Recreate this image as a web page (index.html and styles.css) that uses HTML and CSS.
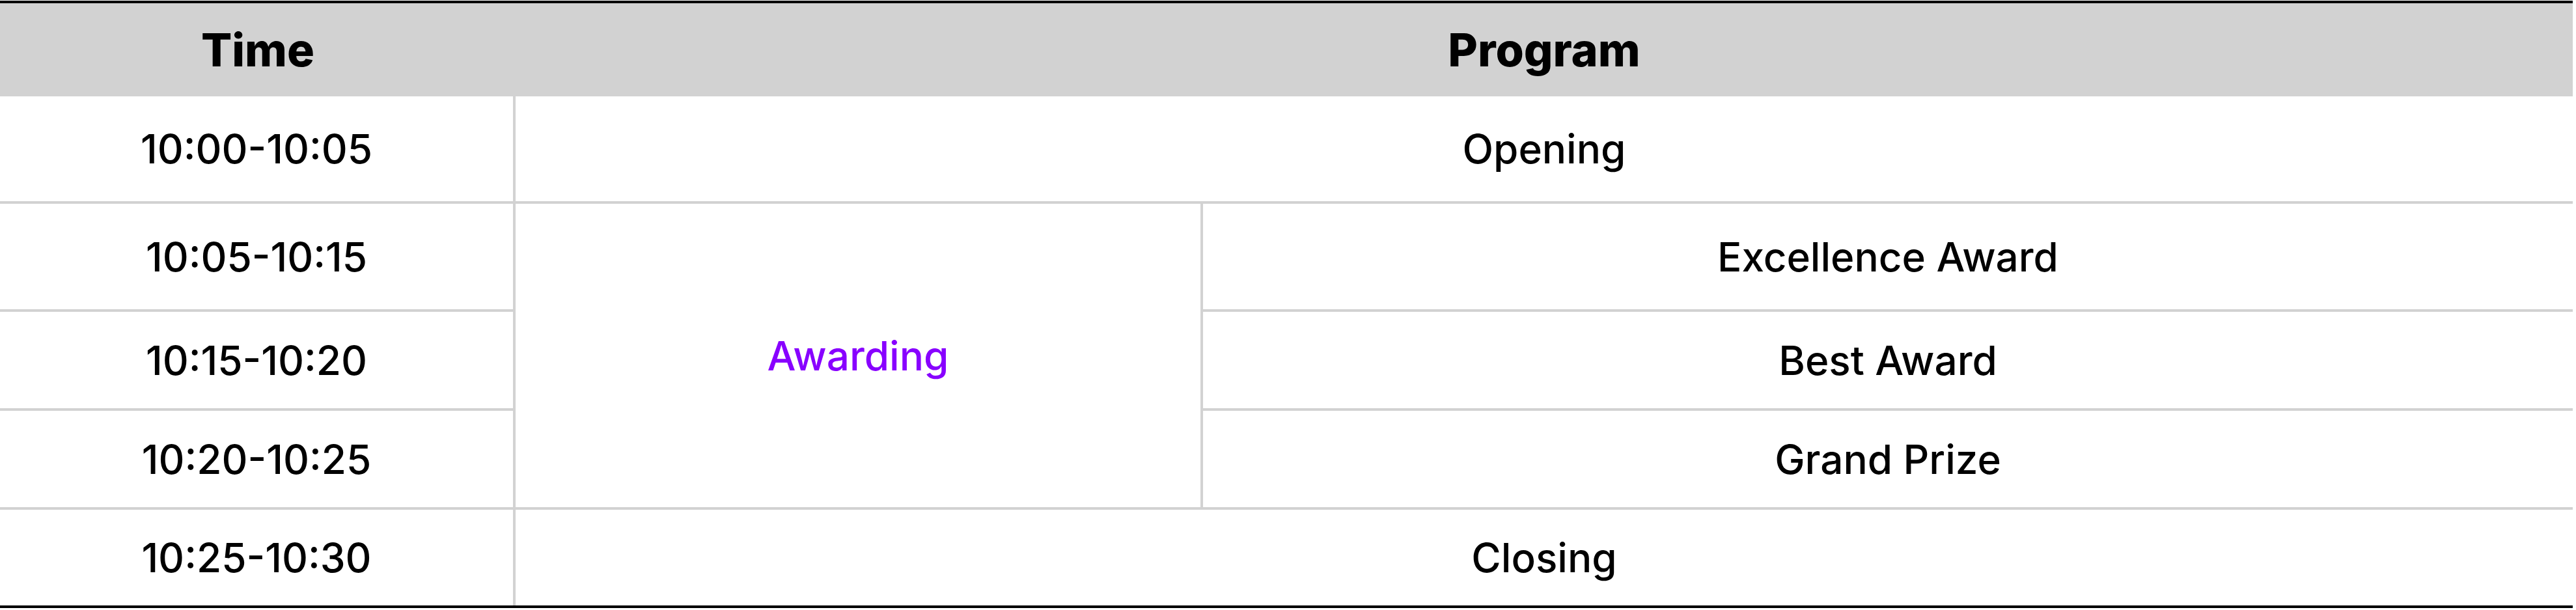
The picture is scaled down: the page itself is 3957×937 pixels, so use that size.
FILE: index.html
```html
<!DOCTYPE html>
<html lang="en">
<head>
<meta charset="utf-8">
<title>Program</title>
<link rel="stylesheet" href="styles.css">
</head>
<body>
<table class="schedule">
  <colgroup>
    <col class="col-time">
    <col class="col-group">
    <col class="col-item">
  </colgroup>
  <thead>
    <tr class="row-head">
      <th>Time</th>
      <th colspan="2">Program</th>
    </tr>
  </thead>
  <tbody>
    <tr class="row-a">
      <td class="time">10:00-10:05</td>
      <td colspan="2" class="line">Opening</td>
    </tr>
    <tr class="row-b">
      <td class="time">10:05-10:15</td>
      <td rowspan="3" class="group">Awarding</td>
      <td class="line">Excellence Award</td>
    </tr>
    <tr class="row-c">
      <td class="time">10:15-10:20</td>
      <td class="line">Best Award</td>
    </tr>
    <tr class="row-c">
      <td class="time">10:20-10:25</td>
      <td class="line">Grand Prize</td>
    </tr>
    <tr class="row-e">
      <td class="time last">10:25-10:30</td>
      <td colspan="2">Closing</td>
    </tr>
  </tbody>
</table>
</body>
</html>
```
FILE: styles.css
```css
html, body {
  margin: 0;
  padding: 0;
  background: #ffffff;
}

body {
  padding-top: 1px;
  font-family: Inter, "Noto Sans", sans-serif;
  color: #000000;
}

.schedule {
  width: 3952px;
  table-layout: fixed;
  border-collapse: separate;
  border-spacing: 0;
  border-top: 4px solid #000000;
  border-bottom: 4px solid #000000;
}

.col-time { width: 792px; }
.col-group { width: 1056px; }
.col-item { width: 2104px; }

.schedule th,
.schedule td {
  box-sizing: border-box;
  padding: 0;
  text-align: center;
  vertical-align: middle;
}

.schedule th {
  background: #d2d2d2;
  font-size: 70px;
  font-weight: 800;
  height: 143px;
}

.schedule td {
  font-size: 62px;
  font-weight: 500;
}

.row-a td { height: 165px; }
.row-b td { height: 166px; }
.row-c td { height: 152px; }
.row-e td { height: 147px; }

.time {
  border-right: 4px solid #d2d2d2;
  border-bottom: 4px solid #d2d2d2;
}

.time.last {
  border-bottom: none;
}

.line {
  border-bottom: 4px solid #d2d2d2;
}

.schedule td.group {
  color: #8800ff;
  border-right: 4px solid #d2d2d2;
  border-bottom: 4px solid #d2d2d2;
  height: auto;
}
```
